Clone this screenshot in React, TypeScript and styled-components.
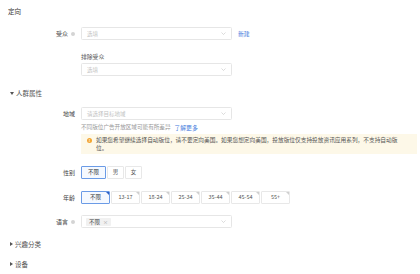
import React from 'react';
import styled, { createGlobalStyle, css } from 'styled-components';

const GlobalStyle = createGlobalStyle`
  html, body {
    margin: 0;
    padding: 0;
    background: #fff;
  }
  body {
    font-family: "Noto Sans CJK SC", "Noto Sans", sans-serif;
    color: #333;
  }
`;

const Page = styled.div`
  width: 420px;
  height: 274px;
  padding: 0 3px 0 8px;
  box-sizing: border-box;
  overflow: hidden;
  font-size: 6px;
`;

const Title = styled.div`
  margin-top: 5px;
  height: 12px;
  line-height: 12px;
  font-size: 6.5px;
  color: #333;
`;

const Group = styled.div<{ $mt: number; $open?: boolean }>`
  margin-top: ${(p) => p.$mt}px;
  height: 12px;
  line-height: 12px;
  font-size: 6.5px;
  color: #555;
  display: flex;
  align-items: center;
  gap: 2px;
  padding-left: 2px;
  &::before {
    content: '';
    display: block;
    width: 0;
    height: 0;
    ${(p) =>
      p.$open
        ? css`
            border-left: 2px solid transparent;
            border-right: 2px solid transparent;
            border-top: 3px solid #555;
          `
        : css`
            border-top: 2px solid transparent;
            border-bottom: 2px solid transparent;
            border-left: 3px solid #555;
          `}
  }
`;

const Row = styled.div<{ $mt: number }>`
  margin-top: ${(p) => p.$mt}px;
  display: grid;
  grid-template-columns: 67px 1fr;
  column-gap: 6px;
  align-items: center;
`;

const Label = styled.div`
  display: flex;
  justify-content: flex-end;
  align-items: center;
  gap: 3px;
  color: #444;
  font-size: 6px;
  white-space: nowrap;
`;

const Help = styled.span`
  display: inline-block;
  width: 4px;
  height: 4px;
  border-radius: 50%;
  background: #d4d4d4;
`;

const Control = styled.div`
  display: flex;
  align-items: center;
  gap: 6px;
  min-width: 0;
`;

const Stack = styled.div`
  grid-column: 2;
  display: flex;
  flex-direction: column;
`;

const Caption = styled.div`
  height: 12px;
  line-height: 12px;
  font-size: 5.8px;
  color: #555;
`;

const Select = styled.div`
  width: 151px;
  height: 13px;
  box-sizing: border-box;
  border: 1px solid #e6e6e6;
  border-radius: 1.5px;
  display: flex;
  align-items: center;
  padding: 0 5px 0 4px;
  background: #fff;
`;

const Placeholder = styled.span`
  flex: 1;
  color: #c2c2c2;
  font-size: 5.5px;
  padding-left: 1px;
`;

const Chevron = () => (
  <svg width="5" height="3" viewBox="0 0 5 3">
    <path d="M0.5 0.5 L2.5 2.5 L4.5 0.5" fill="none" stroke="#c4c4c4" strokeWidth="0.6" />
  </svg>
);

const LinkText = styled.a`
  color: #3e78dc;
  font-size: 5.8px;
  text-decoration: none;
`;

const Hint = styled.div`
  margin-top: 2px;
  height: 11px;
  line-height: 11px;
  font-size: 5.6px;
  color: #999;
  display: flex;
  gap: 4px;
`;

const Warning = styled.div`
  margin-top: 1px;
  background: #fdf8e8;
  padding: 2px 16px 2px 6px;
  display: flex;
  gap: 4px;
  font-size: 5.7px;
  line-height: 8px;
  color: #555;
`;

const WarnIcon = styled.span`
  flex: none;
  width: 5px;
  height: 5px;
  margin-top: 1.5px;
  border-radius: 50%;
  background: #f3a530;
  color: #fff;
  font-size: 4px;
  line-height: 5px;
  text-align: center;
  font-weight: bold;
`;

const Seg = styled.div`
  display: flex;
  gap: 1px;
`;

const SegButton = styled.div<{ $w: number; $on?: boolean; $corner?: boolean }>`
  position: relative;
  width: ${(p) => p.$w}px;
  height: 13px;
  box-sizing: border-box;
  border: 1px solid ${(p) => (p.$on ? '#6b9be6' : '#e8e8e8')};
  background: ${(p) => (p.$on ? '#f5f9ff' : '#fff')};
  border-radius: 1px;
  font-size: 5.5px;
  line-height: 11px;
  text-align: center;
  color: ${(p) => (p.$on ? '#333' : '#555')};
  ${(p) =>
    p.$corner &&
    css`
      &::after {
        content: '';
        position: absolute;
        top: 0;
        right: 0;
        width: 0;
        height: 0;
        border-left: 3px solid transparent;
        border-top: 3px solid ${p.$on ? '#2c5fc4' : '#cfcfcf'};
      }
    `}
`;

const Tag = styled.span`
  display: inline-flex;
  align-items: center;
  gap: 3px;
  height: 8px;
  padding: 0 3px;
  background: #f1f1f1;
  border-radius: 1px;
  font-size: 5.5px;
  color: #444;
  margin-right: auto;
`;

const TagX = styled.span`
  color: #999;
  font-size: 5px;
`;

const ages = ['不限', '13-17', '18-24', '25-34', '35-44', '45-54', '55+'];

export default function App() {
  return (
    <>
      <GlobalStyle />
      <Page>
        <Title>定向</Title>

        <Row $mt={10}>
          <Label>
            受众 <Help />
          </Label>
          <Control>
            <Select>
              <Placeholder>选填</Placeholder>
              <Chevron />
            </Select>
            <LinkText>新建</LinkText>
          </Control>
        </Row>

        <Row $mt={11}>
          <Stack>
            <Caption>排除受众</Caption>
            <Select>
              <Placeholder>选填</Placeholder>
              <Chevron />
            </Select>
          </Stack>
        </Row>

        <Group $mt={11} $open>
          人群属性
        </Group>

        <Row $mt={8}>
          <Label>地域</Label>
          <Control>
            <Select>
              <Placeholder>请选择目标地域</Placeholder>
              <Chevron />
            </Select>
          </Control>
          <Stack>
            <Hint>
              不同版位广告开放区域可能有所差异
              <LinkText>了解更多</LinkText>
            </Hint>
            <Warning>
              <WarnIcon>!</WarnIcon>
              <span>
                如果您希望继续选择自动版位，请不要定向美国。如果您想定向美国，投放版位仅支持投放资讯应用系列，不支持自动版位。
              </span>
            </Warning>
          </Stack>
        </Row>

        <Row $mt={12}>
          <Label>性别</Label>
          <Seg>
            <SegButton $w={25} $on>
              不限
            </SegButton>
            <SegButton $w={17}>男</SegButton>
            <SegButton $w={17}>女</SegButton>
          </Seg>
        </Row>

        <Row $mt={12}>
          <Label>年龄</Label>
          <Seg>
            {ages.map((a, i) => (
              <SegButton key={a} $w={29} $on={i === 0} $corner>
                {a}
              </SegButton>
            ))}
          </Seg>
        </Row>

        <Row $mt={11}>
          <Label>
            语言 <Help />
          </Label>
          <Control>
            <Select>
              <Tag>
                不限 <TagX>×</TagX>
              </Tag>
              <Chevron />
            </Select>
          </Control>
        </Row>

        <Group $mt={10}>兴趣分类</Group>
        <Group $mt={8}>设备</Group>
      </Page>
    </>
  );
}
